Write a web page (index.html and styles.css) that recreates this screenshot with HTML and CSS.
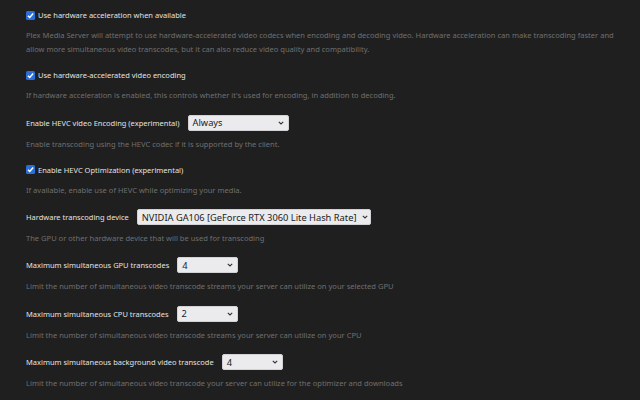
FILE: index.html
```html
<!DOCTYPE html>
<html>
<head>
<meta charset="utf-8">
<link rel="stylesheet" href="styles.css">
</head>
<body>
<div class="page">
  <div class="setting">
    <div class="check-row">
      <span class="box"><svg viewBox="0 0 10 10" width="9" height="9"><path d="M2.2 5.2 L4.2 7.2 L7.9 2.8" fill="none" stroke="#fff" stroke-width="1.6"/></svg></span>
      <span class="label">Use hardware acceleration when available</span>
    </div>
    <p class="desc">Plex Media Server will attempt to use hardware-accelerated video codecs when encoding and decoding video. Hardware acceleration can make transcoding faster and allow more simultaneous video transcodes, but it can also reduce video quality and compatibility.</p>
  </div>
  <div class="setting">
    <div class="check-row">
      <span class="box"><svg viewBox="0 0 10 10" width="9" height="9"><path d="M2.2 5.2 L4.2 7.2 L7.9 2.8" fill="none" stroke="#fff" stroke-width="1.6"/></svg></span>
      <span class="label">Use hardware-accelerated video encoding</span>
    </div>
    <p class="desc">If hardware acceleration is enabled, this controls whether it's used for encoding, in addition to decoding.</p>
  </div>
  <div class="setting">
    <div class="select-row">
      <span class="label">Enable HEVC video Encoding (experimental)</span>
      <div class="select w-hevc"><span class="val">Always</span><svg class="chev" viewBox="0 0 6 4" width="6" height="4"><path d="M0.8 0.8 L3 3 L5.2 0.8" fill="none" stroke="#333" stroke-width="1.1"/></svg></div>
    </div>
    <p class="desc">Enable transcoding using the HEVC codec if it is supported by the client.</p>
  </div>
  <div class="setting">
    <div class="check-row">
      <span class="box"><svg viewBox="0 0 10 10" width="9" height="9"><path d="M2.2 5.2 L4.2 7.2 L7.9 2.8" fill="none" stroke="#fff" stroke-width="1.6"/></svg></span>
      <span class="label">Enable HEVC Optimization (experimental)</span>
    </div>
    <p class="desc">If available, enable use of HEVC while optimizing your media.</p>
  </div>
  <div class="setting">
    <div class="select-row">
      <span class="label">Hardware transcoding device</span>
      <div class="select w-dev"><span class="val">NVIDIA GA106 [GeForce RTX 3060 Lite Hash Rate]</span><svg class="chev" viewBox="0 0 6 4" width="6" height="4"><path d="M0.8 0.8 L3 3 L5.2 0.8" fill="none" stroke="#333" stroke-width="1.1"/></svg></div>
    </div>
    <p class="desc">The GPU or other hardware device that will be used for transcoding</p>
  </div>
  <div class="setting">
    <div class="select-row">
      <span class="label">Maximum simultaneous GPU transcodes</span>
      <div class="select w-num"><span class="val">4</span><svg class="chev" viewBox="0 0 6 4" width="6" height="4"><path d="M0.8 0.8 L3 3 L5.2 0.8" fill="none" stroke="#333" stroke-width="1.1"/></svg></div>
    </div>
    <p class="desc">Limit the number of simultaneous video transcode streams your server can utilize on your selected GPU</p>
  </div>
  <div class="setting">
    <div class="select-row">
      <span class="label">Maximum simultaneous CPU transcodes</span>
      <div class="select w-num"><span class="val">2</span><svg class="chev" viewBox="0 0 6 4" width="6" height="4"><path d="M0.8 0.8 L3 3 L5.2 0.8" fill="none" stroke="#333" stroke-width="1.1"/></svg></div>
    </div>
    <p class="desc">Limit the number of simultaneous video transcode streams your server can utilize on your CPU</p>
  </div>
  <div class="setting">
    <div class="select-row">
      <span class="label">Maximum simultaneous background video transcode</span>
      <div class="select w-num"><span class="val">4</span><svg class="chev" viewBox="0 0 6 4" width="6" height="4"><path d="M0.8 0.8 L3 3 L5.2 0.8" fill="none" stroke="#333" stroke-width="1.1"/></svg></div>
    </div>
    <p class="desc">Limit the number of simultaneous video transcode your server can utilize for the optimizer and downloads</p>
  </div>
</div>
</body>
</html>
```
FILE: styles.css
```css
html, body {
  margin: 0;
  padding: 0;
  background: #1f1f1f;
}
body {
  font-family: "Noto Sans", "Open Sans", sans-serif;
  width: 640px;
  height: 400px;
  overflow: hidden;
}
.page {
  padding: 8px 20px 0 26px;
}
.check-row {
  display: flex;
  align-items: center;
  height: 14px;
  margin-bottom: 1px;
}
.box {
  width: 9px;
  height: 9px;
  background: #2a6fd8;
  border-radius: 1.5px;
  margin-right: 3px;
  display: flex;
  flex-shrink: 0;
}
.label {
  color: #e2e2e2;
  font-size: 7.5px;
  white-space: nowrap;
}
.desc {
  margin: 0;
  color: #6f6f6f;
  font-size: 7.55px;
  line-height: 14px;
  padding: 5px 0 12.3px 0;
}
.select-row {
  display: flex;
  align-items: center;
  height: 16px;
  margin-bottom: 1px;
}
.select-row .label {
  margin-right: 8px;
}
.select {
  flex-shrink: 0;
  height: 16px;
  box-sizing: border-box;
  background: #ebebee;
  border: 1px solid #d2d2d6;
  border-radius: 2px;
  display: flex;
  align-items: center;
  justify-content: space-between;
  padding: 0 4px 0 4px;
  color: #1a1a1a;
  font-size: 9.3px;
}
.val {
  white-space: nowrap;
}
.chev {
  margin-left: 6px;
  flex-shrink: 0;
}
.w-hevc {
  width: 101px;
}
.w-dev {
  width: 234px;
}
.w-num {
  width: 61px;
}
```
